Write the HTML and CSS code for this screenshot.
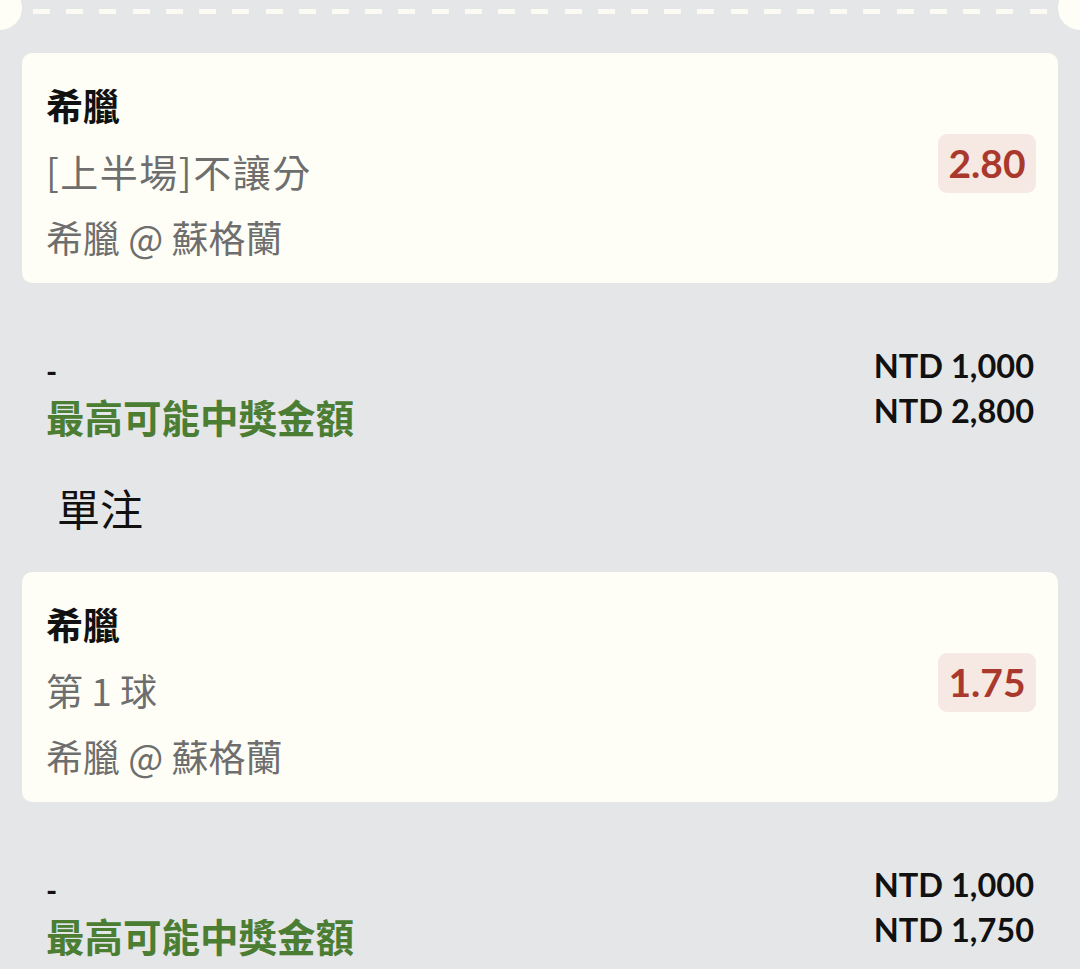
FILE: index.html
```html
<!DOCTYPE html>
<html lang="zh-Hant">
<head>
<meta charset="utf-8">
<title>單注</title>
<link rel="stylesheet" href="styles.css">
</head>
<body>
<div class="ticket">
  <div class="perforation">
    <span></span><span></span><span></span><span></span><span></span><span></span><span></span><span></span>
    <span></span><span></span><span></span><span></span><span></span><span></span><span></span><span></span>
    <span></span><span></span><span></span><span></span><span></span><span></span><span></span><span></span>
    <span></span><span></span><span></span><span></span><span></span><span></span><span></span>
  </div>

  <div class="content">
    <div class="bet-card">
      <div class="bet-info">
        <div class="bet-team">希臘</div>
        <div class="bet-market wide">[上半場]不讓分</div>
        <div class="bet-match">希臘 @ 蘇格蘭</div>
      </div>
      <div class="odds">2.80</div>
    </div>

    <div class="summary">
      <div class="summary-left">
        <div class="summary-dash">-</div>
        <div class="summary-label">最高可能中獎金額</div>
      </div>
      <div class="summary-right">
        <div class="amount">NTD 1,000</div>
        <div class="amount">NTD 2,800</div>
      </div>
    </div>

    <div class="section-title">單注</div>

    <div class="bet-card">
      <div class="bet-info">
        <div class="bet-team">希臘</div>
        <div class="bet-market">第 1 球</div>
        <div class="bet-match">希臘 @ 蘇格蘭</div>
      </div>
      <div class="odds">1.75</div>
    </div>

    <div class="summary">
      <div class="summary-left">
        <div class="summary-dash">-</div>
        <div class="summary-label">最高可能中獎金額</div>
      </div>
      <div class="summary-right">
        <div class="amount">NTD 1,000</div>
        <div class="amount">NTD 1,750</div>
      </div>
    </div>
  </div>
</div>
</body>
</html>
```

FILE: styles.css
```css
html, body {
  margin: 0;
  padding: 0;
}

body {
  background: #e5e6e8;
  font-family: "Noto Sans CJK TC", "Noto Sans", sans-serif;
  color: #111111;
  width: 1080px;
  min-height: 969px;
  overflow: hidden;
}

.ticket {
  position: relative;
}

.ticket::before,
.ticket::after {
  content: "";
  position: absolute;
  top: -14px;
  width: 44px;
  height: 44px;
  border-radius: 50%;
  background: #fefef6;
}

.ticket::before {
  left: -22px;
}

.ticket::after {
  right: -22px;
}

.perforation {
  display: flex;
  justify-content: space-between;
  margin: 0 33px;
  padding-top: 9px;
  height: 5px;
}

.perforation span {
  display: block;
  width: 17px;
  height: 5px;
  background: #fbfbf3;
}

.content {
  padding: 39px 22px 0 22px;
}

.bet-card {
  display: flex;
  align-items: center;
  background: #fefef6;
  border-radius: 10px;
  padding: 19px 22px 13px 24px;
  height: 198px;
}

.bet-info {
  flex: 1;
  display: flex;
  flex-direction: column;
}

.bet-team,
.bet-market,
.bet-match {
  height: 66px;
  line-height: 66px;
  font-size: 37px;
  white-space: nowrap;
}

.bet-team {
  font-weight: 700;
  color: #111111;
}

.bet-market,
.bet-match {
  color: #6e6e6e;
}

.bet-market.wide {
  font-size: 38px;
  letter-spacing: 1.5px;
}

.odds {
  margin-bottom: 15px;
  width: 98px;
  height: 59px;
  line-height: 59px;
  text-align: center;
  border-radius: 9px;
  background: #f6e8e2;
  color: #a9392c;
  font-family: "Lato", "Noto Sans", sans-serif;
  font-weight: 700;
  font-size: 39px;
}

.summary {
  display: flex;
  justify-content: space-between;
  padding: 60px 24px 0 24px;
}

.summary-left {
  padding-top: 6px;
}

.summary-dash,
.summary-label {
  height: 45px;
  line-height: 45px;
  font-weight: 700;
}

.summary-dash {
  font-family: "Lato", "Noto Sans", sans-serif;
  font-size: 30px;
  color: #111111;
}

.summary-label {
  font-size: 38.5px;
  color: #4b7d33;
}

.summary-right {
  text-align: right;
}

.amount {
  height: 45px;
  line-height: 45px;
  font-family: "Lato", "Noto Sans", sans-serif;
  font-weight: 700;
  font-size: 32.5px;
  color: #111111;
}

.section-title {
  margin: 38px 0 35px 35px;
  height: 60px;
  line-height: 60px;
  font-size: 43px;
  color: #111111;
}
```
